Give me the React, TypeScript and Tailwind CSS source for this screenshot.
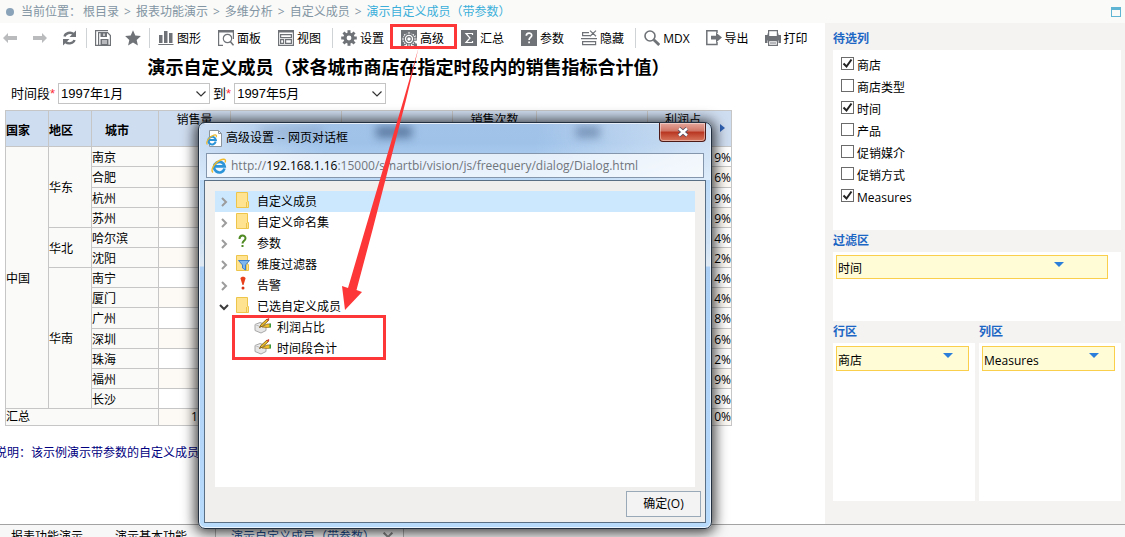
import { useState, type ReactNode } from "react";

const crumbs = ["根目录", "报表功能演示", "多维分析", "自定义成员"];

const cities = [
  { country: "中国", countrySpan: 13, area: "华东", areaSpan: 4, city: "南京", rate: "9%" },
  { city: "合肥", rate: "6%", tall: true },
  { city: "杭州", rate: "9%" },
  { city: "苏州", rate: "9%" },
  { area: "华北", areaSpan: 2, city: "哈尔滨", rate: "4%" },
  { city: "沈阳", rate: "2%" },
  { area: "华南", areaSpan: 7, city: "南宁", rate: "4%" },
  { city: "厦门", rate: "4%" },
  { city: "广州", rate: "8%", tall: true },
  { city: "深圳", rate: "6%" },
  { city: "珠海", rate: "2%" },
  { city: "福州", rate: "9%" },
  { city: "长沙", rate: "8%" },
];

const fields = [
  { name: "商店", checked: true },
  { name: "商店类型", checked: false },
  { name: "时间", checked: true },
  { name: "产品", checked: false },
  { name: "促销媒介", checked: false },
  { name: "促销方式", checked: false },
  { name: "Measures", checked: true },
];

function Icon({ children }: { children: ReactNode }) {
  return (
    <svg viewBox="0 0 16 16" className="h-4 w-4 shrink-0" fill="none" stroke="#6f7378" strokeWidth="1.2">
      {children}
    </svg>
  );
}

const solid = { fill: "#6f7378", stroke: "none" };

const gearTeeth = [0, 45, 90, 135, 180, 225, 270, 315];

const icons = {
  back: <path d="M1 8l5-5v3h9v4H6v3z" fill="#b9bbbd" stroke="none" />,
  forward: <path d="M15 8l-5-5v3H1v4h9v3z" fill="#b9bbbd" stroke="none" />,
  refresh: (
    <>
      <path d="M2.500 6.500C3.500 3 8.500 1.500 11.500 4" strokeWidth="2.400" />
      <path d="M14 .5v6.500H7.500z" {...solid} />
      <path d="M12.500 10c-1 3.200-6 4.500-9 2" strokeWidth="2.400" />
      <path d="M1 15.500V9h6.500z" {...solid} />
    </>
  ),
  save: (
    <>
      <path d="M13 .6H.6v14.800H4M3.600 2.600h9L15.400 5.500v9.900H3.600z" />
      <path d="M5.500 3h6.500v4H5.500zM5.500 9h8v6h-8z" {...solid} />
      <path d="M9 3.500v2.500M7 11h5M7 13h5" stroke="#fff" />
    </>
  ),
  star: <path d="M8 .3l2.300 5.200 5.600.600-4.200 3.800 1.200 5.600L8 12.600l-4.900 2.900 1.200-5.600L.1 6.100l5.600-.600z" {...solid} />,
  chart: <path d="M1 5h3.500v8H1zM6 1h3.500v12H6zM11 3h3.500v10H11zM.3 14h15.200v1H.3z" {...solid} />,
  panel: (
    <>
      <path d="M5 15.400H.6V.600h14.800V9" />
      <path d="M0 0h16v2.500H0z" {...solid} />
      <circle cx="9.500" cy="8.500" r="4.200" />
      <path d="M12.500 11.700l3 3.600" strokeWidth="1.600" />
    </>
  ),
  view: (
    <>
      <path d="M.6.600h14.800v14.800H.600z" />
      <path d="M0 0h16v2.500H0z" {...solid} />
      <path d="M2.600 4.600h10.800v3H2.600zM2.600 9.600h3v3.800h-3zM7.600 9.600h5.800v3.800H7.600z" />
    </>
  ),
  gear: (
    <>
      <circle cx="8" cy="8" r="4" strokeWidth="3.200" />
      {gearTeeth.map((a) => (
        <path key={a} d="M6.500.200h3v3.500h-3z" transform={`rotate(${a} 8 8)`} {...solid} />
      ))}
    </>
  ),
  advanced: (
    <>
      <path d="M0 0h16v5h-3L8 2.500 3 5 1.500 8v3L3 13v3H0zM14.500 5H16v3h-1.500zM13 13.500h3V16h-3z" {...solid} />
      {gearTeeth.map((a) => (
        <path key={a} d="M6.700 4V1.800h2.600V4" transform={`rotate(${a} 8 9)`} fill="#fff" strokeWidth="1.100" />
      ))}
      <circle cx="8" cy="9" r="4.800" fill="#fff" strokeWidth="1.300" />
      <circle cx="8" cy="9" r="2.300" strokeWidth="1.200" />
    </>
  ),
  sum: (
    <>
      <path d="M0 0h16v16H0z" {...solid} />
      <path d="M11.500 5V3.500H5L9 8l-4 4.500h6.500V11" stroke="#fff" strokeWidth="1.200" />
    </>
  ),
  param: (
    <>
      <path d="M0 0h16v16H0z" {...solid} />
      <path d="M5.300 5.800c0-3.600 5.400-3.400 5.400-.400 0 2-2.600 2-2.600 4.600M8.100 11.500v1.800" stroke="#fff" strokeWidth="1.700" />
    </>
  ),
  hide: (
    <path d="M8 2.600H1.600v3H9M0 8.600h16M1.600 11.600h13v3h-13zM9 .6l6 5.600M15 .6L9 6.200" />
  ),
  search: (
    <>
      <circle cx="6" cy="6" r="5" strokeWidth="1.600" />
      <path d="M9.800 9.800l5.400 5.200" strokeWidth="2.800" />
    </>
  ),
  exportIcon: (
    <>
      <path d="M11 3V.800H.8v13.600H11V12" strokeWidth="1.500" />
      <path d="M5 5.800h5V2.600l6 5-6 5V9.400H5z" {...solid} />
    </>
  ),
  print: (
    <>
      <path d="M3.600 6V.600h8.800V6" />
      <path d="M0 5h2.500V3.500h1V6h9V3.500h1V5H16v8h-2.500v-2.500h-11V13H0z" {...solid} />
      <path d="M3.600 10.600h8.800v4.800H3.600zM5 13h6" />
    </>
  ),
};

function Tool({ icon, label }: { icon: ReactNode; label: string }) {
  return (
    <button type="button" className="flex shrink-0 items-center gap-[3px] whitespace-nowrap">
      <Icon>{icon}</Icon>
      <span className="mt-0.5">{label}</span>
    </button>
  );
}

function Divider() {
  return <span className="h-5 w-px shrink-0 bg-[#cfd3d6]" />;
}

function MonthSelect({ id, label, value }: { id: string; label: string; value: string }) {
  return (
    <div className="flex items-center">
      <label htmlFor={id}>
        {label}
        <span className="text-red-500">*</span>
      </label>
      <div className="relative ml-[3px]">
        <select id={id} className="block h-[21px] w-[152px] appearance-none border border-[#c4c4c4] bg-white pl-0.5 leading-none">
          <option>{value}</option>
        </select>
        <svg viewBox="0 0 10 6" className="pointer-events-none absolute top-2 right-1 h-1.5 w-2.5" fill="none" stroke="#333" strokeWidth="1.200">
          <path d="M.5.500L5 5 9.500.500" />
        </svg>
      </div>
    </div>
  );
}

function IeIcon({ className }: { className: string }) {
  return (
    <svg viewBox="0 0 16 16" className={className} fill="none">
      <path d="M13.500 10.500A5.300 5.300 0 1 1 13.600 8.300H4.500" stroke="#2b93d8" strokeWidth="2.700" />
      <path d="M2 14.500C-1 12 4 3.500 11 1.500c3.500-1 4 .800 3 3" stroke="#efb92b" strokeWidth="1.400" />
    </svg>
  );
}

function FolderIcon({ filter }: { filter?: boolean }) {
  return (
    <svg viewBox="0 0 16 16" className="h-4 w-4" fill="none">
      <path d="M1.500.500h11v9h1v6h-12z" fill="#ffe391" stroke="#edc54b" />
      <path d="M11.500 10v5.500" stroke="#edc54b" />
      {filter && <path d="M3.500 5.500h11l-4 4.500v5l-3-2v-3z" fill="#7fb6ee" stroke="#3d7fc9" />}
    </svg>
  );
}

function MarkIcon({ kind }: { kind: "question" | "alert" }) {
  return (
    <svg viewBox="0 0 16 16" className="h-4 w-4" fill="none">
      {kind === "question" ? (
        <path d="M4.500 5c0-4.500 6-4.300 6-.800 0 2.500-3 2.800-3 5.300M7.500 11v2" stroke="#4f8a22" strokeWidth="2" />
      ) : (
        <>
          <path d="M5.500 2.500c0-2.500 5-2.500 5 0L8.500 9h-1z" fill="#e8401c" />
          <circle cx="8" cy="12" r="1.500" fill="#d93214" />
        </>
      )}
    </svg>
  );
}

function MemberIcon() {
  return (
    <svg viewBox="0 0 17 16" className="h-4 w-[17px]" fill="none">
      <path d="M1 6.500L6 4.500l6 2v6l-5 2.500-6-2.500z" fill="#e6e6e6" stroke="#a8a8a8" />
      <path d="M1 6.500l6 2.300 5-2.300" fill="#f7f7f7" stroke="#bbb" />
      <path d="M5.500 9.500L7 6.500 13 1l1.500 1.500L8.500 8z" fill="#f2c12e" stroke="#6b4b12" strokeWidth=".800" />
      <path d="M12.500 1.500L14.500 0l1 1-1.500 2z" fill="#cf3a2e" />
      <path d="M8 9l5-3 3.500 0v3l-3 .500z" fill="#f2c12e" stroke="#8a6516" strokeWidth=".700" />
      <path d="M15.500 5.500h1.500v4h-1.500z" fill="#3c9a3c" />
    </svg>
  );
}

const tree: { label: string; icon: ReactNode; open?: boolean; selected?: boolean }[] = [
  { label: "自定义成员", icon: <FolderIcon />, selected: true },
  { label: "自定义命名集", icon: <FolderIcon /> },
  { label: "参数", icon: <MarkIcon kind="question" /> },
  { label: "维度过滤器", icon: <FolderIcon filter /> },
  { label: "告警", icon: <MarkIcon kind="alert" /> },
  { label: "已选自定义成员", icon: <FolderIcon />, open: true },
];

function DataTable() {
  const head = "border border-[#c6c6c6] p-0 pt-1 font-bold";
  const topHead = "border border-[#c6c6c6] p-0 pt-px align-top font-normal";
  const cell = "border border-[#c6c6c6] p-0 pt-0.5";
  return (
    <table className="ml-[5px] w-[727px] table-fixed border-collapse leading-4">
      <colgroup>
        <col className="w-[43px]" />
        <col className="w-[43px]" />
        <col className="w-[67px]" />
        <col className="w-[72px]" />
        <col className="w-[111px]" />
        <col className="w-[111px]" />
        <col className="w-[84px]" />
        <col className="w-[111px]" />
        <col className="w-[84px]" />
      </colgroup>
      <thead>
        <tr className="h-9 bg-[#cfddf0]">
          <th className={`${head} text-left`}>国家</th>
          <th className={`${head} text-left`}>地区</th>
          <th className={`${head} pr-4 text-center`}>城市</th>
          <th className={topHead}>销售量</th>
          <th className={topHead} />
          <th className={topHead} />
          <th className={topHead}>销售次数</th>
          <th className={topHead} />
          <th className={topHead}>
            <div className="flex justify-between pr-1.5 pl-[17px]">
              利润占
              <svg viewBox="0 0 5 8" className="mt-3 h-2 w-[5px]">
                <path d="M0 0l5 4-5 4z" fill="#2f62b5" />
              </svg>
            </div>
          </th>
        </tr>
      </thead>
      <tbody>
        {cities.map((row, i) => (
          <tr key={row.city} className={`${row.tall ? "h-[21px]" : "h-5"} ${i % 2 ? "bg-[#fdf9f4]" : "bg-white"}`}>
            {row.country && <td rowSpan={row.countrySpan} className={`${cell} bg-[#fafaf8]`}>{row.country}</td>}
            {row.area && <td rowSpan={row.areaSpan} className={`${cell} bg-[#fafaf8]`}>{row.area}</td>}
            <td className={`${cell} bg-[#fafaf8]`}>{row.city}</td>
            <td className={cell} />
            <td className={cell} />
            <td className={cell} />
            <td className={cell} />
            <td className={cell} />
            <td className={`${cell} text-right`}>{row.rate}</td>
          </tr>
        ))}
        <tr className="h-[17px] bg-[#fdf9f4]">
          <td colSpan={3} className="border border-[#c6c6c6] bg-[#fafaf8] p-0">汇总</td>
          <td className="border border-[#c6c6c6] p-0 pl-8">1</td>
          <td className="border border-[#c6c6c6] p-0" />
          <td className="border border-[#c6c6c6] p-0" />
          <td className="border border-[#c6c6c6] p-0" />
          <td className="border border-[#c6c6c6] p-0" />
          <td className="border border-[#c6c6c6] p-0 text-right">0%</td>
        </tr>
      </tbody>
    </table>
  );
}

function Dialog() {
  return (
    <div
      role="dialog"
      aria-label="高级设置"
      className="absolute top-[122px] left-[198px] flex h-[407px] w-[514px] flex-col rounded-[7px] border border-[#22303f] bg-[linear-gradient(#a3c3e8_0,#9fc2e9_20px,#bcdaf7_58px,#cfe2f5_120px,#dfe9f3_143px,#acd0f5_144px,#b8dafb_100%)] px-[5px] pb-[5px] shadow-[0_1px_13px_3px_rgba(0,0,0,0.75),inset_0_0_0_1px_rgba(255,255,255,0.7)]"
    >
      <div className="pointer-events-none absolute inset-x-px top-px h-14 overflow-hidden rounded-t-[6px] bg-[linear-gradient(100deg,rgba(255,255,255,0.45),rgba(255,255,255,0)_25%,rgba(255,255,255,0)_65%,rgba(255,255,255,0.5))]">
        <span className="absolute top-0.5 left-[60px] h-3 w-[62px] bg-[#4b6b94]/20 blur-xs" />
        <span className="absolute top-0.5 left-[176px] h-3 w-9 bg-[#1d3a63]/50 blur-xs" />
        <span className="absolute top-0.5 left-[376px] h-3 w-6 bg-[#1d3a63]/35 blur-xs" />
      </div>
      <div className="relative flex h-[30px] shrink-0 items-center pl-0.5">
        <svg viewBox="0 0 16 17" className="h-[17px] w-4" fill="none">
          <path d="M3.500.500h9l3 3v13h-12z" fill="#fff" stroke="#8c959e" />
          <path d="M12.500.500v3h3" stroke="#8c959e" />
          <g transform="translate(0 4) scale(.72)">
            <path d="M13.500 10.500A5.300 5.300 0 1 1 13.600 8.300H4.500" stroke="#2b93d8" strokeWidth="2.900" />
            <path d="M2 14.500C-1 12 4 3.500 11 1.500c3.500-1 4 .800 3 3" stroke="#efb92b" strokeWidth="1.600" />
          </g>
        </svg>
        <h2 className="ml-1">高级设置 -- 网页对话框</h2>
        <button
          type="button"
          aria-label="关闭"
          className="mb-auto ml-auto flex h-[19px] w-[47px] items-center justify-center rounded-b border border-t-0 border-[#4e1a18] bg-[linear-gradient(#e5a79c_0,#cf7565_45%,#b83520_50%,#d8775e_100%)] shadow-[inset_0_0_0_1px_rgba(255,255,255,0.4)]"
        >
          <svg viewBox="0 0 12 10" className="h-2.5 w-3">
            <path d="M2 1.500l8 7M10 1.500l-8 7" stroke="#4d4d63" strokeWidth="4" />
            <path d="M2 1.500l8 7M10 1.500l-8 7" stroke="#fff" strokeWidth="2.400" />
          </svg>
        </button>
      </div>
      <div className="relative mx-0.5 flex h-[25px] shrink-0 items-center overflow-hidden border border-[#8396ab] bg-white/70 pl-1">
        <IeIcon className="h-4 w-4" />
        <span className="ml-1 text-xs text-[#70757c]">
          http://<span className="text-black">192.168.1.16</span>:15000/smartbi/vision/js/freequery/dialog/Dialog.html
        </span>
      </div>
      <div className="relative mt-0.5 flex min-h-0 flex-1 flex-col border border-[#5a6e84] bg-[#f0efed] px-2.5 pt-2.5">
        <ul className="min-h-0 flex-1 bg-white">
          {tree.map((node) => (
            <li key={node.label} className={`flex h-[21px] items-center pl-1 ${node.selected ? "bg-[#cce8ff]" : ""}`}>
              <svg viewBox="0 0 10 10" className="h-2.5 w-2.5" fill="none" strokeWidth="2" stroke={node.open ? "#3c3c3c" : "#9c9c9c"}>
                <path d={node.open ? "M1 3l4 4 4-4" : "M3 1l4 4-4 4"} />
              </svg>
              <span className="mr-1.5 mb-1 ml-1.5">{node.icon}</span>
              {node.label}
            </li>
          ))}
          {["利润占比", "时间段合计"].map((name) => (
            <li key={name} className="flex h-[21px] items-center pl-[39px]">
              <span className="mr-1.5 mb-1">
                <MemberIcon />
              </span>
              {name}
            </li>
          ))}
        </ul>
        <div className="flex h-[35px] shrink-0 items-start justify-end pt-1">
          <button type="button" className="-mr-1.5 h-[26px] w-[75px] border border-[#9aa9b7] bg-[#f3f3f3]">
            确定(O)
          </button>
        </div>
      </div>
    </div>
  );
}

function DropChip({ name, className, arrow }: { name: string; className: string; arrow: string }) {
  return (
    <button type="button" className={`flex items-center justify-between border border-[#f9cf4b] bg-[#fffcd6] pl-px text-left ${className}`}>
      <span className="mt-1">{name}</span>
      <svg viewBox="0 0 10 5" className={`mb-1.5 h-[5px] w-2.5 ${arrow}`}>
        <path d="M0 0h10L5 5z" fill="#2b7fdb" />
      </svg>
    </button>
  );
}

function Sidebar() {
  const [items, setItems] = useState(fields);
  const title = "flex h-[22px] items-center font-bold text-[#1c66c4]";

  return (
    <aside className="flex w-[300px] shrink-0 flex-col bg-[#f4f3f2] pr-1 pb-[23px] pl-2">
      <h2 className={`${title} mt-[5px]`}>待选列</h2>
      <div className="h-[180px] bg-white px-2 pt-1">
        {items.map((item, i) => (
          <label key={item.name} className="flex h-[22px] items-center">
            <span className="relative mb-1 h-[13px] w-[13px]">
              <input
                type="checkbox"
                checked={item.checked}
                onChange={() => setItems(items.map((f, n) => (n === i ? { ...f, checked: !f.checked } : f)))}
                className="peer block h-[13px] w-[13px] appearance-none border border-[#6b6b6b] bg-white"
              />
              <svg viewBox="0 0 13 13" className="pointer-events-none absolute inset-0 hidden h-[13px] w-[13px] peer-checked:block" fill="none">
                <path d="M2.500 6.500l3 3 5-7" stroke="#222" strokeWidth="2" />
              </svg>
            </span>
            <span className="mt-0.5 ml-[3px]">{item.name}</span>
          </label>
        ))}
      </div>
      <h2 className={title}>过滤区</h2>
      <div className="h-[69px] bg-white p-[3px]">
        <DropChip name="时间" className="h-6 w-[272px]" arrow="mr-[43px]" />
      </div>
      <div className="flex min-h-0 flex-1 gap-1">
        <section className="flex flex-1 flex-col">
          <h2 className={title}>行区</h2>
          <div className="flex-1 bg-white p-[3px]">
            <DropChip name="商店" className="h-[25px] w-[133px]" arrow="mr-[15px]" />
          </div>
        </section>
        <section className="flex flex-1 flex-col">
          <h2 className={title}>列区</h2>
          <div className="flex-1 bg-white p-[3px]">
            <DropChip name="Measures" className="h-[25px] w-[133px]" arrow="mr-[15px]" />
          </div>
        </section>
      </div>
    </aside>
  );
}

function App() {
  return (
    <div className="relative flex h-screen flex-col overflow-hidden bg-white font-['Open_Sans','Noto_Sans_CJK_SC',sans-serif] text-xs text-black">
      <header className="flex h-[23px] shrink-0 items-center justify-between bg-[#fafaf8] px-1 text-[#8295a3]">
        <nav className="flex items-center">
          <span className="mr-[7px] ml-0.5 h-2 w-2 rounded-full bg-[#8aa3b8]" />
          <span className="mr-0.5">当前位置：</span>
          {crumbs.map((crumb) => (
            <span key={crumb}>
              <a href="#">{crumb}</a>
              <span className="mx-[5px]">&gt;</span>
            </span>
          ))}
          <a href="#" className="text-[#3bafda]">
            演示自定义成员（带参数）
          </a>
        </nav>
        <span className="h-2.5 w-2.5 border border-t-[3px] border-[#5fb4d3]" />
      </header>

      <div className="flex min-h-0 flex-1">
        <main className="min-w-0 flex-1 overflow-hidden">
          <div className="flex h-[30px] items-center gap-2 pl-0.5">
            <div className="flex gap-[14px]">
              <button type="button" aria-label="后退"><Icon>{icons.back}</Icon></button>
              <button type="button" aria-label="前进"><Icon>{icons.forward}</Icon></button>
              <button type="button" aria-label="刷新"><Icon>{icons.refresh}</Icon></button>
            </div>
            <Divider />
            <div className="flex gap-[14px]">
              <button type="button" aria-label="保存"><Icon>{icons.save}</Icon></button>
              <button type="button" aria-label="收藏"><Icon>{icons.star}</Icon></button>
            </div>
            <Divider />
            <div className="mr-[3px] flex gap-[17px]">
              <Tool icon={icons.chart} label="图形" />
              <Tool icon={icons.panel} label="面板" />
              <Tool icon={icons.view} label="视图" />
            </div>
            <Divider />
            <div className="mr-[3px] flex gap-[17px]">
              <Tool icon={icons.gear} label="设置" />
              <Tool icon={icons.advanced} label="高级" />
              <Tool icon={icons.sum} label="汇总" />
              <Tool icon={icons.param} label="参数" />
              <Tool icon={icons.hide} label="隐藏" />
            </div>
            <Divider />
            <div className="flex gap-4">
              <Tool icon={icons.search} label="MDX" />
              <Tool icon={icons.exportIcon} label="导出" />
              <Tool icon={icons.print} label="打印" />
            </div>
          </div>

          <h1 className="h-[30px] pr-2 text-center text-lg leading-7 font-bold whitespace-nowrap">
            演示自定义成员（求各城市商店在指定时段内的销售指标合计值）
          </h1>

          <div className="mb-1.5 flex gap-[3px] pl-[11px] font-['Liberation_Sans','Noto_Sans_CJK_SC',sans-serif] text-[13px] leading-5">
            <MonthSelect id="from-month" label="时间段" value="1997年1月" />
            <MonthSelect id="to-month" label="到" value="1997年5月" />
          </div>

          <DataTable />
          <p className="mt-[17px] -ml-[5px] leading-5 whitespace-nowrap text-[#000080]">说明：该示例演示带参数的自定义成员</p>
        </main>
        <Sidebar />
      </div>

      <footer className="h-[13px] shrink-0 overflow-hidden border-t border-[#a3a3a3] bg-[#f7f7f7]">
        <div className="flex h-6 items-center leading-6">
          <button type="button" className="ml-[11px]">报表功能演示</button>
          <button type="button" className="ml-8">演示基本功能</button>
          <button type="button" className="ml-7 flex w-[189px] items-center border-x border-[#b5b5b5] bg-[#fdfdfd] pl-[15px] text-[#1c4f94]">
            演示自定义成员（带参数）
            <svg viewBox="0 0 8 8" className="ml-2 h-2.5 w-2.5" stroke="#8a8a8a" strokeWidth="1.600">
              <path d="M.5.500l7 7M7.500.500l-7 7" />
            </svg>
          </button>
        </div>
      </footer>

      <Dialog />

      <div className="pointer-events-none absolute top-6 left-[390px] h-[25px] w-[67px] border-3 border-[#fd3737]" />
      <div className="pointer-events-none absolute top-[315px] left-[232px] h-[45px] w-[154px] border-3 border-[#fd3737]" />
      <svg viewBox="0 0 80 262" className="pointer-events-none absolute top-12 left-[340px] h-[262px] w-20">
        <path d="M78.500 0L63.500 52 25 182 8 240 2 238 5 262 22 244 16.500 242 32.500 182 66 52z" fill="#fd3737" />
      </svg>
    </div>
  );
}

export default App;
